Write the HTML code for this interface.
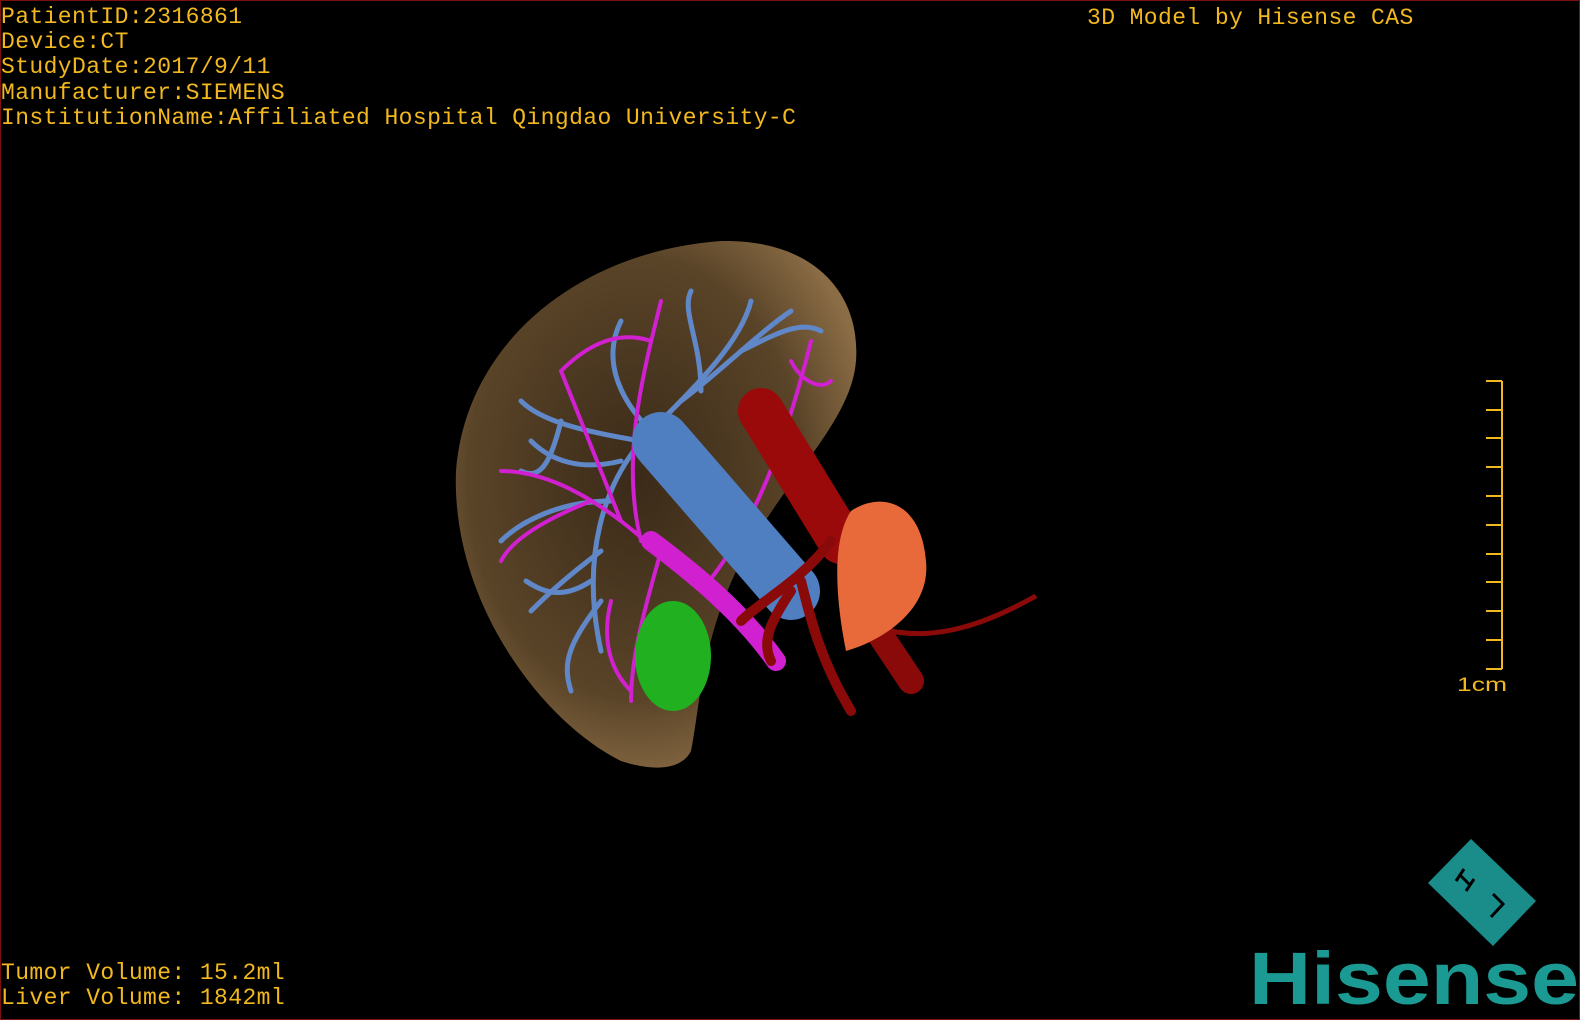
<!DOCTYPE html>
<html><head><meta charset="utf-8"><style>
html,body{margin:0;padding:0;background:#000;}
#f{position:relative;width:1578px;height:1018px;border:1px solid #7a1010;background:#000;overflow:hidden;}
.t{position:absolute;font-family:"Liberation Mono",monospace;font-size:23px;letter-spacing:0.4px;color:#f2b81e;line-height:25.2px;white-space:pre;}
</style></head><body><div id="f">
<div class="t" style="left:0;top:4px">PatientID:2316861
Device:CT
StudyDate:2017/9/11
Manufacturer:SIEMENS
InstitutionName:Affiliated Hospital Qingdao University-C</div>
<div class="t" style="left:1086px;top:5px">3D Model by Hisense CAS</div>
<div class="t" style="left:0;top:960px">Tumor Volume: 15.2ml
Liver Volume: 1842ml</div>
<svg width="1580" height="1020" style="position:absolute;left:0;top:0">
<defs><radialGradient id="lv" cx="45%" cy="45%" r="60%"><stop offset="0" stop-color="#3a2a18"/><stop offset=".7" stop-color="#5a4428"/><stop offset="1" stop-color="#8a6c45"/></radialGradient></defs>
<path d="M620 760 C540 720 450 600 455 470 C465 340 580 250 720 240 C810 238 860 290 855 360 C850 420 790 470 740 560 C700 640 700 700 690 750 C680 770 650 770 620 760Z" fill="url(#lv)"/>
<g stroke="#6088c8" stroke-width="5" fill="none" stroke-linecap="round">
<path d="M600 650 C580 560 600 480 650 430 C700 380 740 340 750 300"/>
<path d="M650 430 C620 400 600 360 620 320"/><path d="M700 390 C700 340 680 310 690 290"/>
<path d="M640 440 C580 430 540 420 520 400"/><path d="M610 500 C560 500 520 520 500 540"/>
<path d="M600 550 C560 580 540 600 530 610"/><path d="M740 350 C780 330 800 320 820 330"/>
<path d="M600 600 C570 640 560 660 570 690"/><path d="M560 420 C550 460 540 480 520 470"/>
<path d="M680 400 C720 370 760 330 790 310"/><path d="M620 460 C580 470 550 460 530 440"/>
<path d="M590 580 C560 600 540 590 525 580"/>
</g>
<g stroke="#d020d0" stroke-width="4" fill="none" stroke-linecap="round">
<path d="M770 660 C720 600 670 560 620 520 C580 490 540 470 500 470"/>
<path d="M660 550 C640 620 630 660 630 700"/><path d="M620 520 C600 470 580 420 560 370"/>
<path d="M640 540 C620 460 640 380 660 300"/><path d="M590 500 C540 520 510 540 500 560"/>
<path d="M700 590 C760 520 790 420 810 340"/><path d="M560 370 C590 340 620 330 650 340"/>
<path d="M610 600 C600 640 610 670 630 690"/><path d="M790 360 C800 380 820 390 830 380"/>
</g>
<path d="M775 660 C740 610 690 570 650 540" stroke="#d020d0" stroke-width="20" fill="none" stroke-linecap="round"/>
<path d="M660 440 L790 590" stroke="#4f7fc0" stroke-width="58" stroke-linecap="round"/>
<path d="M760 410 L840 540" stroke="#9a0a0a" stroke-width="46" stroke-linecap="round"/>
<path d="M830 540 C800 580 760 600 740 620 M800 580 C810 620 820 660 850 710 M840 560 L900 670 M790 590 C770 620 760 640 770 660" stroke="#8a0a0a" stroke-width="10" fill="none" stroke-linecap="round"/>
<path d="M870 620 L910 680" stroke="#8a0a0a" stroke-width="26" stroke-linecap="round"/>
<path d="M890 630 C940 640 990 620 1035 595" stroke="#8a0a0a" stroke-width="5" fill="none"/>
<path d="M850 510 C880 490 920 500 925 560 C930 610 880 640 845 650 C835 600 830 540 850 510Z" fill="#e86a3a"/>
<ellipse cx="672" cy="655" rx="38" ry="55" fill="#20b020"/>
<g stroke="#f2b81e" stroke-width="2"><line x1="1501" y1="380" x2="1501" y2="668"/>
<line x1="1485" y1="380" x2="1501" y2="380"/><line x1="1485" y1="409" x2="1501" y2="409"/><line x1="1485" y1="437" x2="1501" y2="437"/><line x1="1485" y1="466" x2="1501" y2="466"/><line x1="1485" y1="495" x2="1501" y2="495"/><line x1="1485" y1="524" x2="1501" y2="524"/><line x1="1485" y1="553" x2="1501" y2="553"/><line x1="1485" y1="581" x2="1501" y2="581"/><line x1="1485" y1="610" x2="1501" y2="610"/><line x1="1485" y1="639" x2="1501" y2="639"/><line x1="1485" y1="668" x2="1501" y2="668"/></g>
<text x="1456" y="690" font-family="Liberation Sans,sans-serif" font-size="19" fill="#f2b81e" textLength="50" lengthAdjust="spacingAndGlyphs">1cm</text>
<polygon points="1470,838 1535,900 1492,945 1427,882" fill="#1a8c8a"/>
<path d="M1463 868 L1455 880 M1473 878 L1465 890 M1459 874 L1469 884 M1492 893 L1502 903 L1490 916" stroke="#000" stroke-width="3" fill="none"/>
<text x="1248" y="1003" font-family="Liberation Sans,sans-serif" font-weight="bold" font-size="74" fill="#1a9a92" textLength="330" lengthAdjust="spacingAndGlyphs">Hisense</text>
</svg>
</div></body></html>
